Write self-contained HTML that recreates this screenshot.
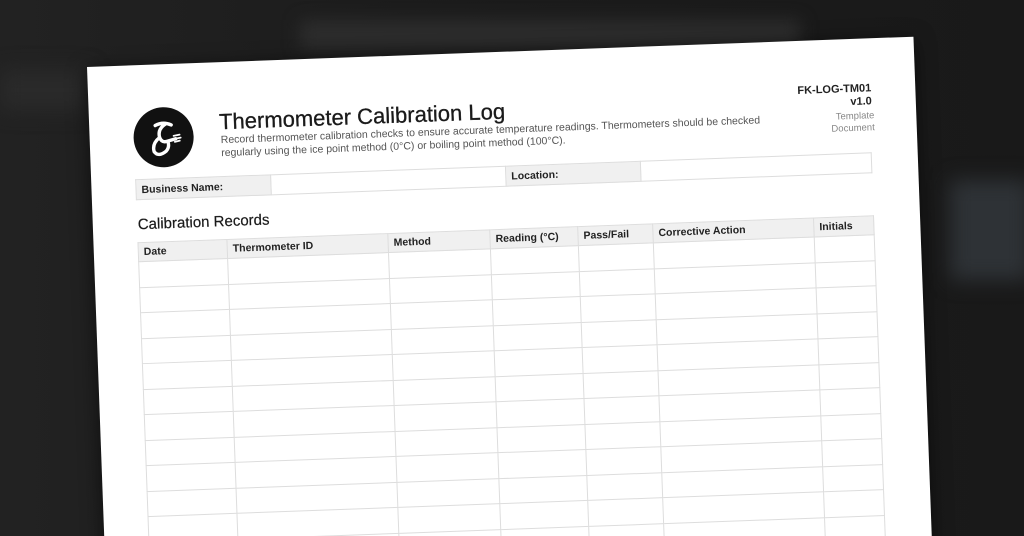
<!DOCTYPE html>
<html><head><meta charset="utf-8"><style>
html,body{margin:0;padding:0;width:1024px;height:536px;overflow:hidden;background:#1b1b1b;font-family:"Liberation Sans",Arial,sans-serif}
.wrap{position:absolute;left:0;top:0;width:1024px;height:536px;overflow:hidden}
.bg{position:absolute;inset:0;background:linear-gradient(90deg,#222 0%,#1c1c1c 40%,#191919 100%)}
.b1{position:absolute;left:300px;top:20px;width:500px;height:30px;background:#2c2c2c;filter:blur(8px)}
.b2{position:absolute;left:950px;top:180px;width:80px;height:100px;background:#2e3236;filter:blur(10px)}
.b3{position:absolute;left:0;top:70px;width:90px;height:40px;background:#2a2a2a;filter:blur(10px)}
.paper{position:absolute;left:87px;top:67px;width:827px;height:540px;background:#fff;transform-origin:0 0;transform:rotate(-2.1deg);box-shadow:0 4px 20px rgba(0,0,0,.6)}
.abs{position:absolute}
.logo{left:44px;top:43px;width:60px;height:60px;border-radius:50%;background:#111}
.title{left:130px;top:47px;font-size:22px;color:#1a1a1a;white-space:nowrap;-webkit-text-stroke:0.3px #1a1a1a}
.desc{left:131px;top:72px;font-size:10.5px;line-height:13px;color:#555;width:580px}
.code{right:44px;top:44px;text-align:right;font-size:11px;line-height:13px;color:#222;font-weight:bold}
.tmpl{right:42px;top:72px;text-align:right;font-size:9.5px;line-height:11.5px;color:#888}
table{border-collapse:collapse;position:absolute}
td{border:1px solid #ddd;padding:0 5px;font-size:10.5px;font-weight:bold;color:#222}
.g{background:#f0f0f0}
.sec{left:45px;top:151px;font-size:15px;color:#1a1a1a;-webkit-text-stroke:0.2px #1a1a1a}
</style></head><body><div class="wrap">
<div class="bg"></div><div class="b1"></div><div class="b2"></div><div class="b3"></div>
<div class="paper">
 <div class="abs logo"><svg width="60" height="60" viewBox="0 0 60 60"><path d="M22 18 Q30 14 38 18 M32 17 Q24 22 26 30 Q28 36 34 34 L42 32 M26 30 Q18 36 20 44 Q24 50 32 44 Q36 40 34 34" stroke="#fff" stroke-width="3.4" fill="none" stroke-linecap="round"/><path d="M40 29 L46 28 M41 32 L47 31 M41 35 L46 34" stroke="#fff" stroke-width="1.8" stroke-linecap="round"/></svg></div>
 <div class="abs title">Thermometer Calibration Log</div>
 <div class="abs desc">Record thermometer calibration checks to ensure accurate temperature readings. Thermometers should be checked regularly using the ice point method (0°C) or boiling point method (100°C).</div>
 <div class="abs code">FK-LOG-TM01<br>v1.0</div>
 <div class="abs tmpl">Template<br>Document</div>
 <table style="left:44px;top:114px;width:737px;height:21px"><tr><td class="g" style="width:124px">Business Name:</td><td style="width:224px"></td><td class="g" style="width:124px">Location:</td><td></td></tr></table>
 <div class="abs sec">Calibration Records</div>
 <table style="left:44px;top:177px;width:737px">
 <tr style="height:19px"><td class="g" style="width:78px">Date</td><td class="g" style="width:150px">Thermometer ID</td><td class="g" style="width:91px">Method</td><td class="g" style="width:77px">Reading (°C)</td><td class="g" style="width:64px">Pass/Fail</td><td class="g" style="width:150px">Corrective Action</td><td class="g">Initials</td></tr>
 <tr style="height:25.5px"><td></td><td></td><td></td><td></td><td></td><td></td><td></td></tr>
 <tr style="height:25.5px"><td></td><td></td><td></td><td></td><td></td><td></td><td></td></tr>
 <tr style="height:25.5px"><td></td><td></td><td></td><td></td><td></td><td></td><td></td></tr>
 <tr style="height:25.5px"><td></td><td></td><td></td><td></td><td></td><td></td><td></td></tr>
 <tr style="height:25.5px"><td></td><td></td><td></td><td></td><td></td><td></td><td></td></tr>
 <tr style="height:25.5px"><td></td><td></td><td></td><td></td><td></td><td></td><td></td></tr>
 <tr style="height:25.5px"><td></td><td></td><td></td><td></td><td></td><td></td><td></td></tr>
 <tr style="height:25.5px"><td></td><td></td><td></td><td></td><td></td><td></td><td></td></tr>
 <tr style="height:25.5px"><td></td><td></td><td></td><td></td><td></td><td></td><td></td></tr>
 <tr style="height:25.5px"><td></td><td></td><td></td><td></td><td></td><td></td><td></td></tr>
 <tr style="height:25.5px"><td></td><td></td><td></td><td></td><td></td><td></td><td></td></tr>
 <tr style="height:25.5px"><td></td><td></td><td></td><td></td><td></td><td></td><td></td></tr>
 </table>
</div>
</div></body></html>
